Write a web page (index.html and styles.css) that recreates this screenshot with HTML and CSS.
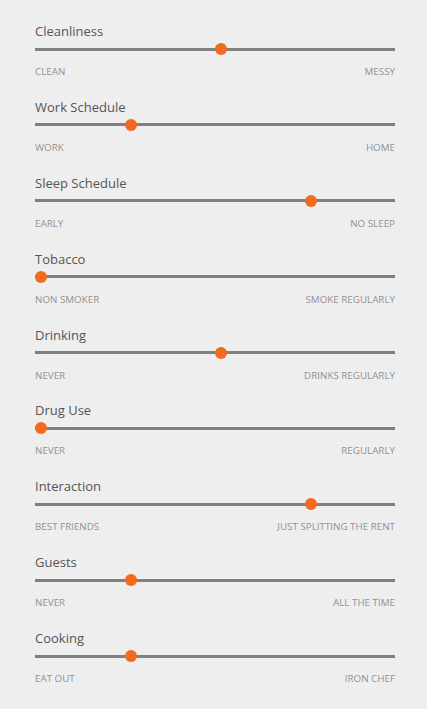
FILE: index.html
```html
<!DOCTYPE html>
<html>
<head>
<meta charset="utf-8">
<link rel="stylesheet" href="styles.css">
</head>
<body>
<div class="prefs">
  <div class="pref">
    <div class="title">Cleanliness</div>
    <div class="slider"><div class="track"></div><div class="thumb" style="left:50%"></div></div>
    <div class="labels"><span>Clean</span><span>Messy</span></div>
  </div>
  <div class="pref">
    <div class="title">Work Schedule</div>
    <div class="slider"><div class="track"></div><div class="thumb" style="left:25%"></div></div>
    <div class="labels"><span>Work</span><span>Home</span></div>
  </div>
  <div class="pref">
    <div class="title">Sleep Schedule</div>
    <div class="slider"><div class="track"></div><div class="thumb" style="left:75%"></div></div>
    <div class="labels"><span>Early</span><span>No sleep</span></div>
  </div>
  <div class="pref">
    <div class="title">Tobacco</div>
    <div class="slider"><div class="track"></div><div class="thumb" style="left:0%"></div></div>
    <div class="labels"><span>Non smoker</span><span>Smoke regularly</span></div>
  </div>
  <div class="pref">
    <div class="title">Drinking</div>
    <div class="slider"><div class="track"></div><div class="thumb" style="left:50%"></div></div>
    <div class="labels"><span>Never</span><span>Drinks regularly</span></div>
  </div>
  <div class="pref">
    <div class="title">Drug Use</div>
    <div class="slider"><div class="track"></div><div class="thumb" style="left:0%"></div></div>
    <div class="labels"><span>Never</span><span>Regularly</span></div>
  </div>
  <div class="pref">
    <div class="title">Interaction</div>
    <div class="slider"><div class="track"></div><div class="thumb" style="left:75%"></div></div>
    <div class="labels"><span>Best friends</span><span>Just splitting the rent</span></div>
  </div>
  <div class="pref">
    <div class="title">Guests</div>
    <div class="slider"><div class="track"></div><div class="thumb" style="left:25%"></div></div>
    <div class="labels"><span>Never</span><span>All the time</span></div>
  </div>
  <div class="pref">
    <div class="title">Cooking</div>
    <div class="slider"><div class="track"></div><div class="thumb" style="left:25%"></div></div>
    <div class="labels"><span>Eat out</span><span>Iron chef</span></div>
  </div>
</div>
</body>
</html>
```
FILE: styles.css
```css
html, body {
  margin: 0;
  padding: 0;
  background: #eeeeee;
}
body {
  font-family: "Open Sans", "Noto Sans", sans-serif;
  width: 427px;
  height: 709px;
  overflow: hidden;
}
.prefs {
  width: 360px;
  margin-left: 35px;
  padding-top: 22px;
  display: flex;
  flex-direction: column;
  gap: 18.9px;
}
.pref {
  display: flex;
  flex-direction: column;
}
.title {
  font-size: 13px;
  line-height: 18px;
  color: #555555;
}
.slider {
  position: relative;
  height: 12px;
  margin-top: 3px;
  display: flex;
  align-items: center;
}
.track {
  width: 100%;
  height: 3px;
  background: #808080;
}
.thumb {
  position: absolute;
  top: 0;
  width: 12px;
  height: 12px;
  border-radius: 50%;
  background: #f26a1e;
}
.labels {
  margin-top: 10px;
  display: flex;
  justify-content: space-between;
  font-size: 9.8px;
  line-height: 14px;
  text-transform: uppercase;
  color: #929292;
}
```
